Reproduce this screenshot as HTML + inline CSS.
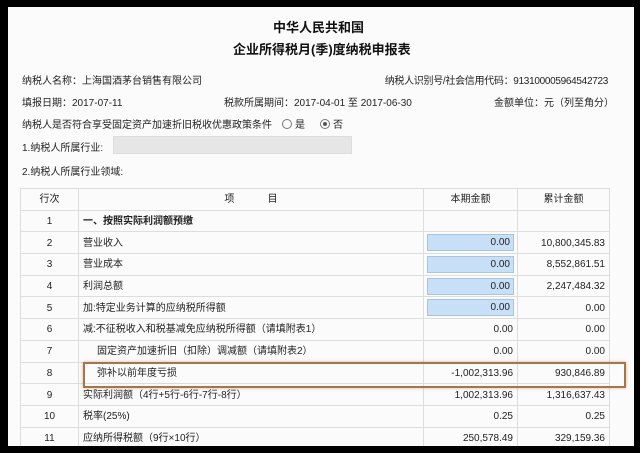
<!DOCTYPE html>
<html><head><meta charset="utf-8">
<style>
html,body{margin:0;padding:0;background:#000;}
body{width:640px;height:453px;position:relative;overflow:hidden;font-family:"Liberation Sans","Noto Sans CJK SC",sans-serif;font-size:10px;color:#222;}
.page{position:absolute;left:8px;top:7px;width:626px;height:439px;background:#fbfbfb;}
.t{position:absolute;white-space:nowrap;}
.title{font-weight:bold;font-size:13px;color:#111;}
table{position:absolute;left:20px;top:188px;border-collapse:collapse;table-layout:fixed;}
td{border:1px solid #ddd;height:18.7px;padding:2px 4px 0 4px;white-space:nowrap;font-size:10px;line-height:12px;vertical-align:middle;overflow:hidden;}
td.c{text-align:center;}
td.r{text-align:right;}
.blue{display:block;background:#c7e0f7;border:1px solid #a9c4de;height:15px;line-height:15px;text-align:right;padding-right:3px;margin:-2px -1px 0 -1px;}
.box{position:absolute;left:83px;top:362px;width:539px;height:22px;border:2px solid #a8744a;box-shadow:0 0 3px rgba(168,116,74,.5);}
.sel{position:absolute;left:113px;top:136px;width:237px;height:16px;background:#e6e6e6;border:1px solid #ddd;}
.radio{display:inline-block;width:8px;height:8px;border:1px solid #777;border-radius:50%;vertical-align:-1px;margin-right:3px;position:relative;}
.radio.on:after{content:"";position:absolute;left:2px;top:2px;width:4px;height:4px;border-radius:50%;background:#555;}
</style></head><body>
<div class="page"></div>
<div class="t title" style="left:273px;top:17px;">中华人民共和国</div>
<div class="t title" style="left:233px;top:39px;">企业所得税月(季)度纳税申报表</div>
<div class="t" style="left:22px;top:72px;">纳税人名称：上海国酒茅台销售有限公司</div>
<div class="t" style="right:32px;top:72px;letter-spacing:-0.3px;">纳税人识别号/社会信用代码：913100005964542723</div>
<div class="t" style="left:22px;top:94px;">填报日期：2017-07-11</div>
<div class="t" style="left:224px;top:94px;">税款所属期间：2017-04-01 至 2017-06-30</div>
<div class="t" style="left:494px;top:94px;">金额单位：元（列至角分）</div>
<div class="t" style="left:22px;top:116px;">纳税人是否符合享受固定资产加速折旧税收优惠政策条件</div>
<div class="t" style="left:282px;top:116px;"><span class="radio"></span>是</div>
<div class="t" style="left:320px;top:116px;"><span class="radio on"></span>否</div>
<div class="t" style="left:22px;top:139px;">1.纳税人所属行业:</div>
<div class="sel"></div>
<div class="t" style="left:22px;top:163px;">2.纳税人所属行业领域:</div>
<table>
<colgroup><col style="width:58px"><col style="width:345px"><col style="width:94px"><col style="width:92px"></colgroup>
<tr><td class="c">行次</td><td class="c">项&nbsp;&nbsp;&nbsp;&nbsp;&nbsp;&nbsp;&nbsp;&nbsp;&nbsp;&nbsp;&nbsp;&nbsp;目</td><td class="c">本期金额</td><td class="c">累计金额</td></tr>
<tr><td class="c">1</td><td style="font-weight:bold">一、按照实际利润额预缴</td><td></td><td></td></tr>
<tr><td class="c">2</td><td>营业收入</td><td><span class="blue">0.00</span></td><td class="r">10,800,345.83</td></tr>
<tr><td class="c">3</td><td>营业成本</td><td><span class="blue">0.00</span></td><td class="r">8,552,861.51</td></tr>
<tr><td class="c">4</td><td>利润总额</td><td><span class="blue">0.00</span></td><td class="r">2,247,484.32</td></tr>
<tr><td class="c">5</td><td>加:特定业务计算的应纳税所得额</td><td><span class="blue">0.00</span></td><td class="r">0.00</td></tr>
<tr><td class="c">6</td><td>减:不征税收入和税基减免应纳税所得额（请填附表1）</td><td class="r">0.00</td><td class="r">0.00</td></tr>
<tr><td class="c">7</td><td style="padding-left:18px">固定资产加速折旧（扣除）调减额（请填附表2）</td><td class="r">0.00</td><td class="r">0.00</td></tr>
<tr><td class="c">8</td><td style="padding-left:18px">弥补以前年度亏损</td><td class="r">-1,002,313.96</td><td class="r">930,846.89</td></tr>
<tr><td class="c">9</td><td>实际利润额（4行+5行-6行-7行-8行）</td><td class="r">1,002,313.96</td><td class="r">1,316,637.43</td></tr>
<tr><td class="c">10</td><td>税率(25%)</td><td class="r">0.25</td><td class="r">0.25</td></tr>
<tr><td class="c">11</td><td>应纳所得税额（9行×10行）</td><td class="r">250,578.49</td><td class="r">329,159.36</td></tr>
</table>
<div class="box"></div>
<div style="position:absolute;left:0;top:446px;width:640px;height:7px;background:#000;"></div>
</body></html>
